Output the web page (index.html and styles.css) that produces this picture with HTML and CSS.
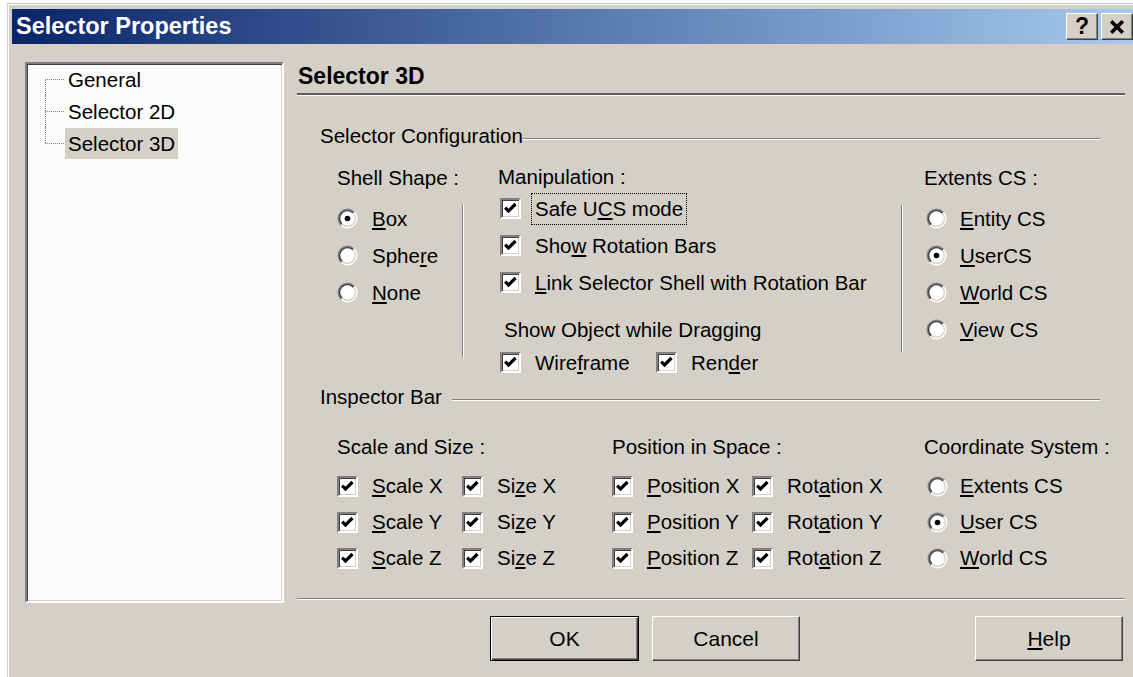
FILE: index.html
```html
<!DOCTYPE html>
<html lang="en">
<head>
<meta charset="utf-8">
<title>Selector Properties</title>
<link rel="stylesheet" href="styles.css">
</head>
<body>
<svg class="defs" width="0" height="0" aria-hidden="true">
  <defs>
    <linearGradient id="rdOuter" x1="0" y1="0" x2="1" y2="1">
      <stop offset="0.5" stop-color="#808080"/>
      <stop offset="0.5" stop-color="#ffffff"/>
    </linearGradient>
    <linearGradient id="rdInner" x1="0" y1="0" x2="1" y2="1">
      <stop offset="0.5" stop-color="#404040"/>
      <stop offset="0.5" stop-color="#d4d0c8"/>
    </linearGradient>
  </defs>
</svg>

<div class="window">
  <div class="titlebar">
    <span class="title">Selector Properties</span>
    <div class="cap-btns">
      <button class="cap-btn">?</button>
      <button class="cap-btn"><svg viewBox="0 0 14 12" class="x-glyph"><path d="M2.5 1.5l9 9M11.5 1.5l-9 9"/></svg></button>
    </div>
  </div>

  <div class="body">
    <div class="tree">
      <ul class="tree-list">
        <li><span>General</span></li>
        <li><span>Selector 2D</span></li>
        <li class="sel"><span>Selector 3D</span></li>
      </ul>
    </div>

    <div class="page">
      <h1 class="page-title">Selector 3D</h1>
      <div class="page-rule"></div>

      <section class="group config">
        <div class="group-head"><span>Selector Configuration</span><i class="etch"></i></div>
        <div class="cols">
          <div class="col shell">
            <div class="col-head">Shell Shape :</div>
            <div class="opts">
              <div class="row"><svg class="rd" viewBox="0 0 21 21"><circle cx="10.5" cy="10.5" r="10" fill="url(#rdOuter)"/><circle cx="10.5" cy="10.5" r="8.6" fill="url(#rdInner)"/><circle cx="10.5" cy="10.5" r="7.2" fill="#fff"/><circle cx="10.5" cy="10.5" r="2.8" fill="#000"/></svg><span><u>B</u>ox</span></div>
              <div class="row"><svg class="rd" viewBox="0 0 21 21"><circle cx="10.5" cy="10.5" r="10" fill="url(#rdOuter)"/><circle cx="10.5" cy="10.5" r="8.6" fill="url(#rdInner)"/><circle cx="10.5" cy="10.5" r="7.2" fill="#fff"/></svg><span>Sphe<u>r</u>e</span></div>
              <div class="row"><svg class="rd" viewBox="0 0 21 21"><circle cx="10.5" cy="10.5" r="10" fill="url(#rdOuter)"/><circle cx="10.5" cy="10.5" r="8.6" fill="url(#rdInner)"/><circle cx="10.5" cy="10.5" r="7.2" fill="#fff"/></svg><span><u>N</u>one</span></div>
            </div>
          </div>
          <div class="vdiv d1"></div>
          <div class="col manip">
            <div class="col-head">Manipulation :</div>
            <div class="row"><span class="cb"><svg viewBox="0 0 17 17"><path d="M3.2 7.6l3.3 3.4 7-7"/></svg></span><span class="focus">Safe U<u>C</u>S mode</span></div>
            <div class="row"><span class="cb"><svg viewBox="0 0 17 17"><path d="M3.2 7.6l3.3 3.4 7-7"/></svg></span><span>Sho<u>w</u> Rotation Bars</span></div>
            <div class="row"><span class="cb"><svg viewBox="0 0 17 17"><path d="M3.2 7.6l3.3 3.4 7-7"/></svg></span><span><u>L</u>ink Selector Shell with Rotation Bar</span></div>
            <div class="sub-head">Show Object while Dragging</div>
            <div class="row">
              <div class="pair"><span class="cb"><svg viewBox="0 0 17 17"><path d="M3.2 7.6l3.3 3.4 7-7"/></svg></span><span>Wire<u>f</u>rame</span></div>
              <div class="pair"><span class="cb"><svg viewBox="0 0 17 17"><path d="M3.2 7.6l3.3 3.4 7-7"/></svg></span><span>Ren<u>d</u>er</span></div>
            </div>
          </div>
          <div class="vdiv d2"></div>
          <div class="col extents">
            <div class="col-head">Extents CS :</div>
            <div class="opts">
              <div class="row"><svg class="rd" viewBox="0 0 21 21"><circle cx="10.5" cy="10.5" r="10" fill="url(#rdOuter)"/><circle cx="10.5" cy="10.5" r="8.6" fill="url(#rdInner)"/><circle cx="10.5" cy="10.5" r="7.2" fill="#fff"/></svg><span><u>E</u>ntity CS</span></div>
              <div class="row"><svg class="rd" viewBox="0 0 21 21"><circle cx="10.5" cy="10.5" r="10" fill="url(#rdOuter)"/><circle cx="10.5" cy="10.5" r="8.6" fill="url(#rdInner)"/><circle cx="10.5" cy="10.5" r="7.2" fill="#fff"/><circle cx="10.5" cy="10.5" r="2.8" fill="#000"/></svg><span><u>U</u>serCS</span></div>
              <div class="row"><svg class="rd" viewBox="0 0 21 21"><circle cx="10.5" cy="10.5" r="10" fill="url(#rdOuter)"/><circle cx="10.5" cy="10.5" r="8.6" fill="url(#rdInner)"/><circle cx="10.5" cy="10.5" r="7.2" fill="#fff"/></svg><span><u>W</u>orld CS</span></div>
              <div class="row"><svg class="rd" viewBox="0 0 21 21"><circle cx="10.5" cy="10.5" r="10" fill="url(#rdOuter)"/><circle cx="10.5" cy="10.5" r="8.6" fill="url(#rdInner)"/><circle cx="10.5" cy="10.5" r="7.2" fill="#fff"/></svg><span><u>V</u>iew CS</span></div>
            </div>
          </div>
        </div>
      </section>

      <section class="group inspector">
        <div class="group-head"><span>Inspector Bar</span><i class="etch"></i></div>
        <div class="cols cols2">
          <div class="col scale">
            <div class="col-head">Scale and Size :</div>
            <div class="checks">
              <div class="row"><span class="cb"><svg viewBox="0 0 17 17"><path d="M3.2 7.6l3.3 3.4 7-7"/></svg></span><span><u>S</u>cale X</span></div>
              <div class="row"><span class="cb"><svg viewBox="0 0 17 17"><path d="M3.2 7.6l3.3 3.4 7-7"/></svg></span><span>Si<u>z</u>e X</span></div>
              <div class="row"><span class="cb"><svg viewBox="0 0 17 17"><path d="M3.2 7.6l3.3 3.4 7-7"/></svg></span><span><u>S</u>cale Y</span></div>
              <div class="row"><span class="cb"><svg viewBox="0 0 17 17"><path d="M3.2 7.6l3.3 3.4 7-7"/></svg></span><span>Si<u>z</u>e Y</span></div>
              <div class="row"><span class="cb"><svg viewBox="0 0 17 17"><path d="M3.2 7.6l3.3 3.4 7-7"/></svg></span><span><u>S</u>cale Z</span></div>
              <div class="row"><span class="cb"><svg viewBox="0 0 17 17"><path d="M3.2 7.6l3.3 3.4 7-7"/></svg></span><span>Si<u>z</u>e Z</span></div>
            </div>
          </div>
          <div class="col position">
            <div class="col-head">Position in Space :</div>
            <div class="checks">
              <div class="row"><span class="cb"><svg viewBox="0 0 17 17"><path d="M3.2 7.6l3.3 3.4 7-7"/></svg></span><span><u>P</u>osition X</span></div>
              <div class="row"><span class="cb"><svg viewBox="0 0 17 17"><path d="M3.2 7.6l3.3 3.4 7-7"/></svg></span><span>Rot<u>a</u>tion X</span></div>
              <div class="row"><span class="cb"><svg viewBox="0 0 17 17"><path d="M3.2 7.6l3.3 3.4 7-7"/></svg></span><span><u>P</u>osition Y</span></div>
              <div class="row"><span class="cb"><svg viewBox="0 0 17 17"><path d="M3.2 7.6l3.3 3.4 7-7"/></svg></span><span>Rot<u>a</u>tion Y</span></div>
              <div class="row"><span class="cb"><svg viewBox="0 0 17 17"><path d="M3.2 7.6l3.3 3.4 7-7"/></svg></span><span><u>P</u>osition Z</span></div>
              <div class="row"><span class="cb"><svg viewBox="0 0 17 17"><path d="M3.2 7.6l3.3 3.4 7-7"/></svg></span><span>Rot<u>a</u>tion Z</span></div>
            </div>
          </div>
          <div class="col coord">
            <div class="col-head">Coordinate System :</div>
            <div class="opts">
              <div class="row"><svg class="rd" viewBox="0 0 21 21"><circle cx="10.5" cy="10.5" r="10" fill="url(#rdOuter)"/><circle cx="10.5" cy="10.5" r="8.6" fill="url(#rdInner)"/><circle cx="10.5" cy="10.5" r="7.2" fill="#fff"/></svg><span><u>E</u>xtents CS</span></div>
              <div class="row"><svg class="rd" viewBox="0 0 21 21"><circle cx="10.5" cy="10.5" r="10" fill="url(#rdOuter)"/><circle cx="10.5" cy="10.5" r="8.6" fill="url(#rdInner)"/><circle cx="10.5" cy="10.5" r="7.2" fill="#fff"/><circle cx="10.5" cy="10.5" r="2.8" fill="#000"/></svg><span><u>U</u>ser CS</span></div>
              <div class="row"><svg class="rd" viewBox="0 0 21 21"><circle cx="10.5" cy="10.5" r="10" fill="url(#rdOuter)"/><circle cx="10.5" cy="10.5" r="8.6" fill="url(#rdInner)"/><circle cx="10.5" cy="10.5" r="7.2" fill="#fff"/></svg><span><u>W</u>orld CS</span></div>
            </div>
          </div>
        </div>
      </section>

      <div class="page-rule bottom"></div>
    </div>
  </div>

  <div class="buttons">
    <button class="btn default">OK</button>
    <button class="btn cancel">Cancel</button>
    <button class="btn help"><u>H</u>elp</button>
  </div>
</div>
</body>
</html>
```
FILE: styles.css
```css
* { box-sizing: border-box; }

html, body { margin: 0; height: 100%; }

body {
  background: #fff;
  overflow: hidden;
  font-family: "Liberation Sans", Arial, sans-serif;
  font-size: 20.5px;
  color: #000;
}

.defs { position: absolute; width: 0; height: 0; }

u { text-decoration: underline; text-underline-offset: 2px; }

/* window frame */
.window {
  margin: 3px 0 0 7px;
  width: 1130px;
  height: 680px;
  background: #d4d0c8;
  border-top: 1px solid #c6c4be;
  border-left: 1px solid #d4d0c8;
  box-shadow: inset 1px 1px #fff;
  padding: 5px 0 0 4px;
}

.titlebar {
  height: 35px;
  display: flex;
  align-items: center;
  padding-left: 4px;
  background: linear-gradient(to right, #0a246a, #a6caf0);
  color: #fff;
}

.title {
  flex: 1;
  font-weight: bold;
  font-size: 23.5px;
  white-space: nowrap;
}

.cap-btns { display: flex; gap: 3px; margin-right: 4px; }

.cap-btn {
  width: 32px;
  height: 27px;
  padding: 0;
  display: flex;
  align-items: center;
  justify-content: center;
  background: #d4d0c8;
  border: 1px solid;
  border-color: #fff #404040 #404040 #fff;
  box-shadow: inset -1px -1px #808080;
  font-family: "Liberation Sans", Arial, sans-serif;
  font-weight: bold;
  font-size: 23px;
  color: #000;
}

.x-glyph { width: 18px; height: 16px; }
.x-glyph path { stroke: #000; stroke-width: 2.8; fill: none; }

/* dialog body */
.body {
  display: grid;
  grid-template-columns: 259px 828px;
  column-gap: 13px;
  padding: 18px 0 0 13px;
}

/* tree */
.tree {
  height: 541px;
  background: #fbfdfb;
  border: 2px solid;
  border-color: #808080 #fff #fff #808080;
  box-shadow: inset 1px 1px #404040, inset -1px -1px #d4d0c8;
}

.tree-list {
  list-style: none;
  margin: -1px 0 0 18px;
  padding: 0;
}

.tree-list li {
  position: relative;
  height: 32px;
  padding-left: 20px;
  display: flex;
  align-items: center;
}

.tree-list li span {
  height: 31px;
  line-height: 31px;
  padding: 0 3px;
  white-space: nowrap;
}

.tree-list li.sel span { background: #d4d0c8; }

.tree-list li::before {
  content: "";
  position: absolute;
  left: 0;
  top: 0;
  bottom: 0;
  border-left: 1px dotted #808080;
}
.tree-list li:first-child::before { top: 50%; }
.tree-list li:last-child::before { bottom: 50%; }

.tree-list li::after {
  content: "";
  position: absolute;
  left: 0;
  top: 50%;
  width: 19px;
  border-top: 1px dotted #808080;
}

/* property page */
.page { display: flex; flex-direction: column; }

.page-title {
  margin: 0;
  padding-left: 1px;
  font-size: 23px;
  font-weight: bold;
  line-height: 28px;
}

.page-rule {
  margin-top: 3px;
  height: 3px;
  border-top: 2px solid #5e5e5e;
  border-bottom: 1px solid #fff;
}

.page-rule.bottom {
  margin-top: 22px;
  height: 2px;
  border-top: 1px solid #808080;
}

.group { margin-left: 23px; width: 780px; }

.group-head {
  display: flex;
  height: 24px;
  line-height: 24px;
  white-space: nowrap;
}

.etch {
  flex: 1;
  align-self: flex-end;
  height: 2px;
  margin-bottom: 8px;
  border-top: 1px solid #808080;
  border-bottom: 1px solid #fff;
}

.config { margin-top: 28px; }
.inspector { margin-top: 4px; }
.inspector .etch { margin-left: 10px; }

.cols {
  display: flex;
  align-items: flex-start;
  padding-left: 17px;
  margin-top: 15px;
}

.col { flex: none; }

.col-head {
  height: 30px;
  line-height: 30px;
  white-space: nowrap;
}

.row {
  display: flex;
  align-items: center;
  height: 37px;
  white-space: nowrap;
}

.rd { width: 21px; height: 21px; flex: none; margin-right: 14px; }

.cb {
  flex: none;
  width: 21px;
  height: 21px;
  margin-right: 14px;
  display: flex;
  align-items: center;
  justify-content: center;
  background: #fff;
  border: 2px solid;
  border-color: #808080 #fff #fff #808080;
  box-shadow: inset 1px 1px #404040, inset -1px -1px #d4d0c8;
}
.cb svg { width: 17px; height: 17px; }
.cb path { fill: none; stroke: #000; stroke-width: 3.2; }

.opts { margin-top: 7px; }

.shell { width: 125px; }

.vdiv {
  flex: none;
  width: 2px;
  margin-top: 42px;
  border-left: 1px solid #808080;
  border-right: 1px solid #fff;
}
.d1 { height: 152px; }
.d2 { height: 147px; }

.manip { width: 403px; margin-left: 34px; }
.manip .col-head { height: 27px; line-height: 27px; }
.manip .row { padding-left: 2px; }

.focus {
  margin-left: -4px;
  padding: 0 3px;
  height: 32px;
  line-height: 30px;
  border: 1px dotted #000;
}

.sub-head {
  margin-top: 15px;
  height: 28px;
  line-height: 28px;
  padding-left: 6px;
  white-space: nowrap;
}

.pair { display: flex; align-items: center; }
.pair:first-child { width: 156px; }

.extents { margin-left: 21px; }
.extents .row { padding-left: 2px; }
.extents .rd { margin-right: 13px; }

/* inspector bar */
.cols2 { margin-top: 23px; }

.checks {
  display: grid;
  margin-top: 6px;
}
.checks .row { height: 36px; }

.scale { width: 275px; }
.scale .checks { grid-template-columns: 125px 1fr; }

.position { width: 312px; }
.position .checks { grid-template-columns: 140px 1fr; }

.coord .opts { margin-top: 6px; }
.coord .row { height: 36px; padding-left: 3px; }
.coord .rd { margin-right: 12px; }

/* command buttons */
.buttons {
  display: flex;
  margin-top: 13px;
  padding-left: 478px;
}

.btn {
  width: 148px;
  height: 45px;
  padding: 0;
  background: #d4d0c8;
  border: 1px solid;
  border-color: #fff #404040 #404040 #fff;
  box-shadow: inset -1px -1px #808080;
  font-family: "Liberation Sans", Arial, sans-serif;
  font-size: 21px;
  color: #000;
}

.btn.default {
  width: 149px;
  border: 1px solid #000;
  box-shadow: inset 1px 1px #fff, inset -1px -1px #404040, inset -2px -2px #808080;
}

.btn.cancel { margin-left: 13px; }
.btn.help { margin-left: 175px; }
```
